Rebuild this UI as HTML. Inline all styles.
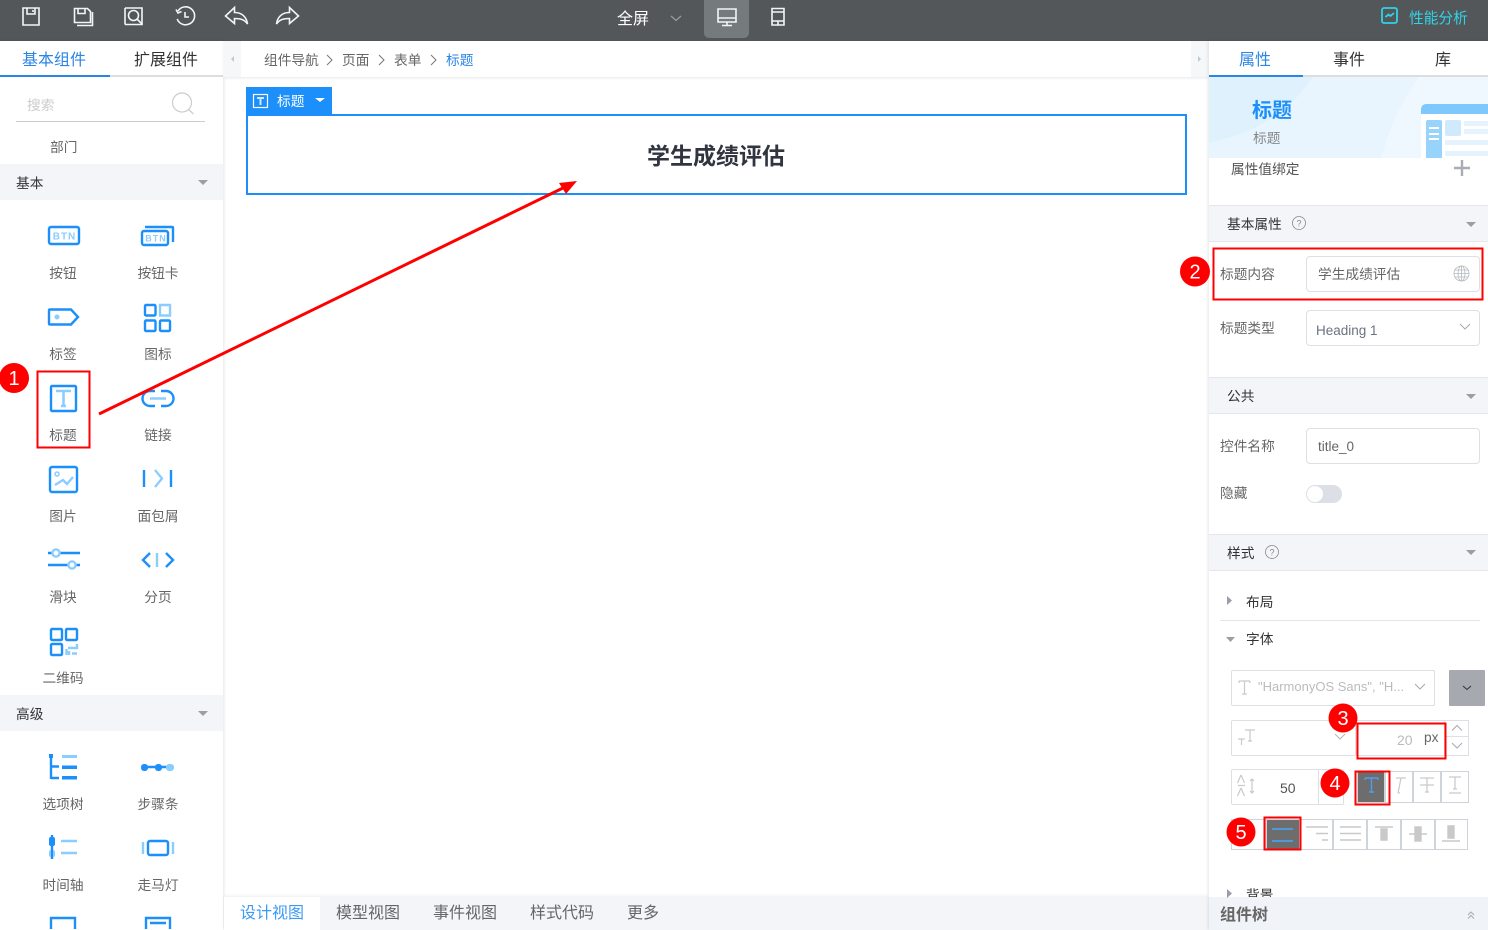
<!DOCTYPE html>
<html lang="zh"><head><meta charset="utf-8"><title>设计器</title>
<style>
html,body{margin:0;padding:0;width:1488px;height:930px;overflow:hidden;background:#fff}
body{position:relative;font-family:"Liberation Sans","Noto Sans CJK SC",sans-serif;font-size:13.7px;color:#666}
div{position:absolute;box-sizing:border-box}
.t{line-height:20px;white-space:nowrap;margin-top:1px}
.c{transform:translateX(-50%)}
.l{color:#777}
.d{color:#333}
.sec{background:#f4f5f9;border-top:1px solid #e6e7ec;border-bottom:1px solid #e6e7ec}
.in{background:#fff;border:1px solid #dcdfe6;border-radius:4px}
.b{border:1px solid #cfd4da;background:#fff}
svg{position:absolute;left:0;top:0;overflow:visible}
</style></head><body>
<!-- top bar -->
<div style="left:0;top:0;width:1488px;height:41px;background:#53575a"></div>
<div style="left:704px;top:0;width:45px;height:38px;background:#757b7d;border-radius:0 0 5px 5px"></div>
<div class="t c" style="left:633px;top:9px;color:#fff;font-size:16px">全屏</div>
<div class="t" style="left:1409px;top:8px;color:#2fd4e6;font-size:14.7px">性能分析</div>

<!-- left panel -->
<div style="left:0;top:41px;width:223px;height:889px;background:#fff;box-shadow:1px 0 3px rgba(0,0,0,.1)"></div>
<div style="left:0;top:75px;width:223px;height:2px;background:#ddd"></div>
<div style="left:0;top:75px;width:110px;height:2px;background:#2b85e4"></div>
<div class="t c" style="left:54px;top:50px;color:#2b85e4;font-size:16px">基本组件</div>
<div class="t c" style="left:166px;top:50px;color:#333;font-size:16px">扩展组件</div>
<div class="t" style="left:27px;top:95px;color:#ccc">搜索</div>
<div style="left:16px;top:121px;width:189px;height:1px;background:#ccc"></div>
<div class="t" style="left:50px;top:137px" >部门</div>
<div class="sec" style="left:0;top:164px;width:223px;height:36px;border:0"></div>
<div class="t d" style="left:16px;top:173px">基本</div>
<div class="sec" style="left:0;top:695px;width:223px;height:36px;border:0"></div>
<div class="t d" style="left:16px;top:704px">高级</div>
<div class="t c" style="left:63px;top:263px">按钮</div>
<div class="t c" style="left:158px;top:263px">按钮卡</div>
<div class="t c" style="left:63px;top:344px">标签</div>
<div class="t c" style="left:158px;top:344px">图标</div>
<div class="t c" style="left:63px;top:425px">标题</div>
<div class="t c" style="left:158px;top:425px">链接</div>
<div class="t c" style="left:63px;top:506px">图片</div>
<div class="t c" style="left:158px;top:506px">面包屑</div>
<div class="t c" style="left:63px;top:587px">滑块</div>
<div class="t c" style="left:158px;top:587px">分页</div>
<div class="t c" style="left:63px;top:668px">二维码</div>
<div class="t c" style="left:63px;top:794px">选项树</div>
<div class="t c" style="left:158px;top:794px">步骤条</div>
<div class="t c" style="left:63px;top:875px">时间轴</div>
<div class="t c" style="left:158px;top:875px">走马灯</div>

<!-- breadcrumb -->
<div style="left:224px;top:41px;width:985px;height:36px;background:#fff;box-shadow:0 1px 3px rgba(0,0,0,.1)"></div>
<div style="left:223px;top:41px;width:18px;height:36px;background:#f6f7f9"></div>
<div style="left:1191px;top:41px;width:18px;height:36px;background:#f6f7f9"></div>
<div class="t" style="left:264px;top:50px">组件导航</div>
<div class="t" style="left:342px;top:50px">页面</div>
<div class="t" style="left:394px;top:50px">表单</div>
<div class="t" style="left:446px;top:50px;color:#2b85e4">标题</div>

<!-- canvas -->
<div style="left:246px;top:114px;width:941px;height:81px;border:2px solid #1c8ffa"></div>
<div style="left:246px;top:87px;width:86px;height:28px;background:#1c8ffa"></div>
<div class="t" style="left:277px;top:91px;color:#fff">标题</div>
<div class="t c" style="left:716px;top:142px;line-height:26px;font-size:23px;font-weight:bold;color:#303540">学生成绩评估</div>

<!-- bottom tabs -->
<div style="left:224px;top:897px;width:985px;height:33px;background:#f4f5f9;box-shadow:0 -1px 3px rgba(0,0,0,.07)"></div>
<div style="left:224px;top:897px;width:96px;height:33px;background:#fff"></div>
<div class="t c" style="left:272px;top:903px;font-size:16px;color:#3d9bf5">设计视图</div>
<div class="t c" style="left:368px;top:903px;font-size:16px">模型视图</div>
<div class="t c" style="left:465px;top:903px;font-size:16px">事件视图</div>
<div class="t c" style="left:562px;top:903px;font-size:16px">样式代码</div>
<div class="t c" style="left:643px;top:903px;font-size:16px">更多</div>

<!-- right panel -->
<div style="left:1209px;top:41px;width:279px;height:889px;background:#fff;box-shadow:-1px 0 3px rgba(0,0,0,.1)"></div>
<div style="left:1209px;top:75px;width:279px;height:2px;background:#ddd"></div>
<div style="left:1209px;top:75px;width:94px;height:2px;background:#2b85e4"></div>
<div class="t c" style="left:1255px;top:50px;font-size:16px;color:#2b85e4">属性</div>
<div class="t c" style="left:1349px;top:50px;font-size:16px;color:#333">事件</div>
<div class="t c" style="left:1443px;top:50px;font-size:16px;color:#333">库</div>
<div style="left:1209px;top:77px;width:279px;height:81px;background:#e8f5fe;overflow:hidden">
  <div style="left:-200px;top:-170px;width:318px;height:240px;border-radius:50%;background:#e0f1fe"></div>
  <div style="left:165px;top:-100px;width:480px;height:480px;border-radius:50%;background:#eff8fe"></div>
  <div style="left:212px;top:27px;width:70px;height:60px;background:#fff;border-radius:5px 0 0 0"></div>
  <div style="left:212px;top:27px;width:70px;height:10px;background:#7fc8fb;border-radius:5px 0 0 0"></div>
  <div style="left:217px;top:43px;width:16px;height:40px;background:#98d3fc;border-radius:2px"></div>
  <div style="left:220px;top:50px;width:10px;height:2px;background:#fff"></div>
  <div style="left:220px;top:56px;width:10px;height:2px;background:#fff"></div>
  <div style="left:220px;top:61px;width:10px;height:2px;background:#fff"></div>
  <div style="left:236px;top:43px;width:16px;height:16px;background:#cfe9fd;border-radius:2px"></div>
  <div style="left:255px;top:44px;width:30px;height:5px;background:#e4f3fe"></div>
  <div style="left:255px;top:52px;width:30px;height:5px;background:#e4f3fe"></div>
  <div style="left:236px;top:63px;width:50px;height:5px;background:#e4f3fe"></div>
  <div style="left:236px;top:74px;width:50px;height:5px;background:#e4f3fe"></div>
</div>
<div class="t" style="left:1252px;top:100px;font-size:20px;font-weight:bold;color:#1c8ffa">标题</div>
<div class="t" style="left:1253px;top:128px;color:#888">标题</div>
<div class="t" style="left:1231px;top:159px;color:#555">属性值绑定</div>

<div class="sec" style="left:1209px;top:205px;width:279px;height:37px"></div>
<div class="t d" style="left:1227px;top:214px">基本属性</div>
<div class="t" style="left:1220px;top:264px">标题内容</div>
<div class="in" style="left:1306px;top:256px;width:174px;height:36px"></div>
<div class="t" style="left:1318px;top:264px">学生成绩评估</div>
<div class="t" style="left:1220px;top:318px">标题类型</div>
<div class="in" style="left:1306px;top:310px;width:174px;height:36px"></div>
<div class="t" style="left:1316px;top:320px;font-size:13.5px;color:#6b7280">Heading 1</div>

<div class="sec" style="left:1209px;top:377px;width:279px;height:37px"></div>
<div class="t d" style="left:1227px;top:386px">公共</div>
<div class="t" style="left:1220px;top:436px">控件名称</div>
<div class="in" style="left:1306px;top:428px;width:174px;height:36px"></div>
<div class="t" style="left:1318px;top:436px;font-size:13.5px">title_0</div>
<div class="t" style="left:1220px;top:483px">隐藏</div>
<div style="left:1306px;top:485px;width:36px;height:18px;border-radius:9px;background:#dcdfe6"></div>
<div style="left:1307px;top:486px;width:16px;height:16px;border-radius:50%;background:#fff"></div>

<div class="sec" style="left:1209px;top:534px;width:279px;height:37px"></div>
<div class="t d" style="left:1227px;top:543px">样式</div>
<div class="t d" style="left:1246px;top:592px">布局</div>
<div style="left:1220px;top:620px;width:260px;height:1px;background:#e4e6ea"></div>
<div class="t d" style="left:1246px;top:629px">字体</div>

<div class="in" style="left:1231px;top:670px;width:204px;height:36px;border-radius:2px"></div>
<div class="t" style="left:1258px;top:676px;color:#bbb;font-size:13px">"HarmonyOS Sans", "H...</div>
<div style="left:1449px;top:670px;width:36px;height:36px;background:#a6a9b0;border-radius:1px"></div>
<div class="in" style="left:1231px;top:720px;width:125px;height:36px;border-radius:2px"></div>
<div class="b" style="left:1356px;top:720px;width:113px;height:36px;border-color:#dcdfe6"></div>
<div style="left:1444px;top:720px;width:1px;height:36px;background:#dcdfe6"></div>
<div style="left:1444px;top:736px;width:25px;height:1px;background:#dcdfe6"></div>
<div class="t" style="left:1397px;top:729px;color:#bbb;font-size:14px">20</div>
<div class="t" style="left:1424px;top:727px;color:#666">px</div>
<div class="in" style="left:1231px;top:769px;width:113px;height:36px;border-radius:2px"></div>
<div style="left:1318px;top:769px;width:1px;height:36px;background:#dcdfe6"></div>
<div class="t" style="left:1280px;top:777px;font-size:14px;color:#555">50</div>

<div class="b" style="left:1357px;top:771px;width:28px;height:32px;background:#6d6d6d"></div>
<div class="b" style="left:1385px;top:771px;width:28px;height:32px"></div>
<div class="b" style="left:1413px;top:771px;width:28px;height:32px"></div>
<div class="b" style="left:1441px;top:771px;width:28px;height:32px"></div>

<div class="b" style="left:1231px;top:819px;width:35px;height:31px"></div>
<div class="b" style="left:1266px;top:819px;width:34px;height:31px;background:#6d6d6d"></div>
<div class="b" style="left:1300px;top:819px;width:33px;height:31px"></div>
<div class="b" style="left:1333px;top:819px;width:34px;height:31px"></div>
<div class="b" style="left:1367px;top:819px;width:34px;height:31px"></div>
<div class="b" style="left:1401px;top:819px;width:34px;height:31px"></div>
<div class="b" style="left:1435px;top:819px;width:33px;height:31px"></div>

<div class="t d" style="left:1246px;top:885px">背景</div>
<div style="left:1209px;top:897px;width:279px;height:33px;background:#f0f3f7"></div>
<div class="t" style="left:1220px;top:905px;font-size:16px;font-weight:bold;color:#666">组件树</div>

<svg width="1488" height="930" viewBox="0 0 1488 930" fill="none">
<!-- top icons -->
<g stroke="#f2f5f7" stroke-width="1.600">
 <path d="M23 8h16v17H23zM27 8v6h8V8M33 10v2"/>
 <path d="M74.500 8.500h13l3 3v11h-16zM78 8.500v5h7v-5M77 25.500h15.500V12"/>
 <path d="M125 8h17v16.500h-17M125 8v16.500"/><circle cx="133.500" cy="15.500" r="5"/><path d="M137 19l5.500 5.500"/>
 <path d="M178 11a9 9 0 1 1-.8 8M176 9.500l2 3.500 3.500-1.500M185 12v5h4"/>
 <path d="M225.500 16l9-8.500v5c7 0 12 4 13 11.500-3-4.500-7-5.500-13-5.500v5z"/>
 <path d="M298.500 16l-9-8.500v5c-7 0-12 4-13 11.500 3-4.500 7-5.500 13-5.500v5z"/>
 <path d="M718 9h18v13h-18zM718 18h18M727 22v3M722 25.500h10"/>
 <path d="M772 8.500h12v16.500h-12zM772 12h12M772 21h12M778 21v4"/>
</g>
<path d="M671 16l5 4.500 5-4.500" stroke="#9a9ea1" stroke-width="1.200"/>
<g stroke="#2fd4e6" stroke-width="1.800"><rect x="1382" y="8" width="15" height="15" rx="2"/><path d="M1385.500 17l3-2.500 2 1.500 3.500-3"/></g>

<!-- panel toggles and breadcrumb -->
<path d="M234 56v6l-3-3zM1198 56v6l3-3z" fill="#c4c7cc"/>
<path d="M327 55l5 5-5 5M379 55l5 5-5 5M431 55l5 5-5 5" stroke="#777"/>
<!-- search -->
<g stroke="#ccc" stroke-width="1.200"><circle cx="182" cy="102.500" r="9.500"/><path d="M188.500 109.500l5 4.500"/></g>
<!-- section arrows -->
<path d="M198 180h10l-5 5zM198 711h10l-5 5zM1466 222h10l-5 5zM1466 394h10l-5 5zM1466 550h10l-5 5zM1226 637h9l-4.500 5z" fill="#9a9ea6"/>
<path d="M1227 596v9l5-4.500zM1227 889v9l5-4.500z" fill="#9a9ea6"/>

<!-- left icons -->
<g stroke="#1c8ffa" stroke-width="2.400">
 <rect x="49" y="227" width="30" height="17" rx="2"/>
 <rect x="142" y="231" width="26" height="14" rx="2" fill="#fff"/>
 <path d="M145 227h27c.8 0 1 .5 1 1v14"/>
 <path d="M50 309.500h21l7 7.500-7 7.500H50c-.7 0-1-.5-1-1V310.500c0-.5.300-1 1-1z"/>
 <rect x="145" y="305" width="10.500" height="10.500" rx="1"/><rect x="145" y="320.500" width="10.500" height="10.500" rx="1"/><rect x="160" y="320.500" width="10" height="10.500" rx="1"/>
 <rect x="51" y="386" width="25" height="25" rx="1"/>
 <path d="M155 391h-5a7.500 7.500 0 0 0 0 15h5M161 391h5a7.500 7.500 0 0 1 0 15h-5"/>
 <rect x="50" y="467" width="27" height="25" rx="2"/>
 <path d="M144 470v17M171 470v17"/>
 <path d="M48 553h32M48 565h32"/>
 <path d="M150 553l-7 7 7 7M166 553l7 7-7 7"/>
 <rect x="51" y="629" width="11" height="11" rx="1"/><rect x="66" y="629" width="11" height="11" rx="1"/><rect x="51" y="644" width="11" height="11" rx="1"/>
 <path d="M51 755v24M51 766.500h8M51 778h8" />
 <path d="M143 767h27"/>
 <path d="M52 835v24"/>
 <rect x="148" y="841" width="20" height="14" rx="2"/>
 <path d="M51 929v-11h24v11M146 929v-11h24v11M150 923h16"/>
</g>
<g fill="#1c8ffa"><rect x="141" y="764" width="7" height="7" rx="3"/><rect x="155" y="764" width="7" height="7" rx="3"/><rect x="49" y="837" width="6" height="9" rx="2"/><rect x="49" y="754" width="4" height="4"/><rect x="62" y="765.500" width="15" height="3.500"/><rect x="62" y="776" width="15" height="3.500"/></g>
<g fill="#8ccdff"><rect x="62" y="755" width="15" height="3"/></g>
<g stroke="#8ccdff" stroke-width="2.400">
 <path d="M160 305h10v10.500h-10z"/>
 <path d="M56 391h15M63.500 391v15M61 406h5M150 398.500h16" stroke-width="2.600"/>
 <path d="M55 485l8-5 4 4 6-7M155 470l7 8.500-7 8.500M157 553v14"/>
 <circle cx="56" cy="553" r="3.600" fill="#fff"/><circle cx="72" cy="565" r="3.600" fill="#fff"/>
 <path d="M68 648h9M77 644v5M66.500 649v6M69 651v4M72 653.500h5"/>
 <path d="M61 841h16M61 853h16" />
 <path d="M143 842v12M173 842v12"/>
</g>
<g fill="#8ccdff"><circle cx="57" cy="317" r="2.500"/><rect x="166" y="764" width="8" height="7" rx="3"/><rect x="49" y="850" width="6" height="7" rx="2"/></g>
<path d="M52 835v24" stroke="#1c8ffa" stroke-width="2"/>
<circle cx="57" cy="474" r="2" stroke="#8ccdff" stroke-width="1.500"/>
<g font-family="Liberation Sans,sans-serif" font-weight="bold" fill="#8ccdff" text-anchor="middle" font-size="10" letter-spacing="1">
 <text x="64.500" y="239.500">BTN</text><text x="156" y="241.500" font-size="9">BTN</text>
</g>
<!-- selected tag -->
<rect x="253.500" y="94.500" width="14" height="13" stroke="#fff" stroke-width="1.200"/>
<path d="M257 98h7M260.500 98v7" stroke="#cfe7ff" stroke-width="2"/>
<path d="M315 98h10l-5 4z" fill="#fff"/>

<!-- right misc -->
<path d="M1462 160v16M1454 168h16" stroke="#aaadb4" stroke-width="2.400"/>
<g stroke="#888" stroke-width=".8"><circle cx="1299" cy="223" r="6.500"/><circle cx="1272" cy="552" r="6.500"/></g>
<g font-family="Liberation Sans,sans-serif" fill="#888" text-anchor="middle" font-size="9"><text x="1299" y="226.500">?</text><text x="1272" y="555.500">?</text></g>
<g stroke="#b5b9bf" stroke-width=".8"><circle cx="1461.500" cy="273.500" r="7.500"/><ellipse cx="1461.500" cy="273.500" rx="3.500" ry="7.500"/><path d="M1454 273.500h15M1455 270h13M1455 277h13M1461.500 266v15"/></g>
<path d="M1460 324l5 5 5-5M1415 684l5 5 5-5" stroke="#aaa"/>
<path d="M1335 734l5 5 5-5" stroke="#b5b5b5"/>
<path d="M1463 686l4 3.500 4-3.500" stroke="#333"/>
<path d="M1452 730.500l5-5 5 5M1452 743l5 5 5-5" stroke="#aaa"/>
<!-- font controls -->
<g stroke="#c9c9c9" stroke-width="1.200">
 <path d="M1239 681h11M1244.500 681v13M1242 694h5M1239 681v2M1250 681v2"/>
 <path d="M1238 739h7M1241.500 739v6M1245 730h10M1250 730v11M1248 741h4"/>
 <path d="M1241 775l-3.500 8M1241 775l3.500 8M1238 785.500h7M1241 788l-3.500 8M1241 788l3.500 8M1252 779v14M1250 781l2-2 2 2M1250 791l2 2 2-2"/>
 <path d="M1396 778h10M1401 778l-3 15M1398 793h2"/>
 <path d="M1420 778h14M1427 778v14M1420 785h14M1425 792h4"/>
 <path d="M1449 777h12M1455 777v12M1449 793h12M1453 789h4"/>
</g>
<path d="M1365 778h13M1371.500 778v14M1369 792h5M1365 778v2M1378 778v2" stroke="#4d9fe8" stroke-width="1.400"/>
<path d="M1272 829h21M1272 841h21" stroke="#4d9fe8" stroke-width="1.800"/>
<g stroke="#c9c9c9" stroke-width="1.400">
 <path d="M1306 827h22M1316 833.500h12M1322 840h6"/>
 <path d="M1340 827h21M1340 833.500h21M1340 840h21"/>
 <path d="M1375 827h18M1381 829h6v11h-6z" fill="#c9c9c9"/>
 <path d="M1409 834h18M1415 827h6v14h-6z" fill="#c9c9c9"/>
 <path d="M1442 841h18M1448 826h6v12h-6z" fill="#c9c9c9"/>
</g>
<path d="M1468 915l3-3 3 3M1468 918.500l3-3 3 3" stroke="#aaa"/>

<!-- red annotations -->
<g stroke="#f00" stroke-width="2">
 <rect x="37.500" y="371.500" width="52" height="76"/>
 <rect x="1213.500" y="248.500" width="269" height="51"/>
 <rect x="1357.500" y="723.500" width="88" height="35"/>
 <rect x="1355.500" y="771.500" width="34" height="33"/>
 <rect x="1264.500" y="817.500" width="36" height="32"/>
</g>
<path d="M99 414L565 187" stroke="#f00" stroke-width="3"/>
<path d="M577 181L559 183L566 194z" fill="#f00"/>
<g fill="#f00"><circle cx="14" cy="378" r="15"/><circle cx="1195" cy="271.500" r="15"/><circle cx="1343" cy="718" r="14.500"/><circle cx="1335" cy="783" r="14.500"/><circle cx="1241" cy="832" r="14.500"/></g>
<g fill="#fff" font-family="Liberation Sans,sans-serif" font-size="20" text-anchor="middle">
 <text x="14" y="385">1</text><text x="1195" y="278.500">2</text><text x="1343" y="725">3</text><text x="1335" y="790">4</text><text x="1241" y="839">5</text>
</g>
</svg>
</body></html>
